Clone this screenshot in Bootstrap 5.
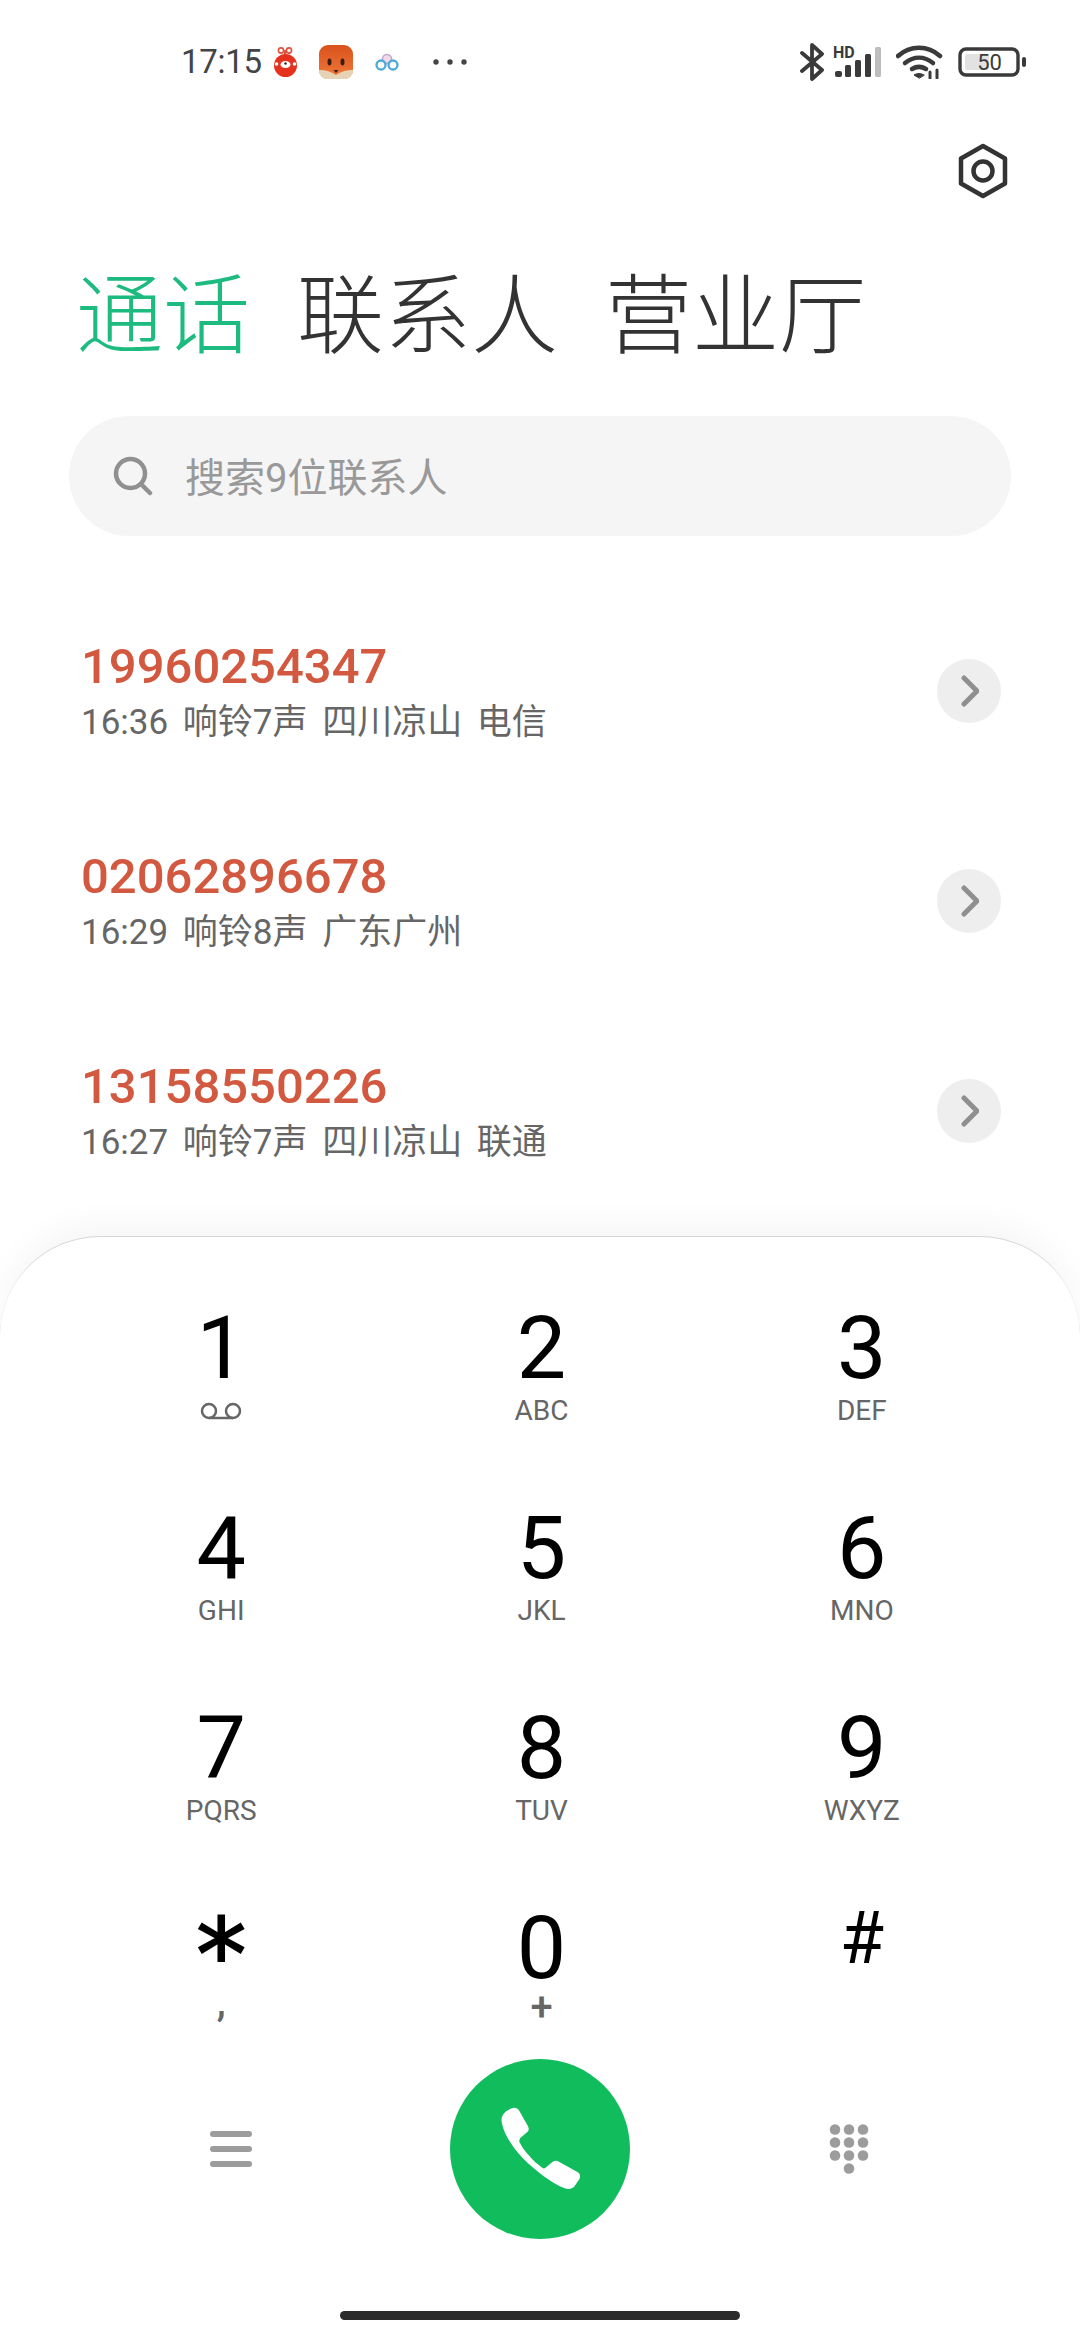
<!DOCTYPE html>
<html lang="zh">
<head>
<meta charset="utf-8">
<title>通话</title>
<link href="https://cdn.jsdelivr.net/npm/bootstrap@5.3.0/dist/css/bootstrap.min.css" rel="stylesheet">
<style>
html,body{margin:0;background:#fff;}
.shell{width:1080px;height:2340px;overflow:hidden;background:#fff;font-family:Roboto,"Noto Sans CJK SC",sans-serif;}
.statusbar{height:124px;padding:0 54px 0 181px;color:#444;}
.clock{font-size:33px;line-height:40px;width:92px;color:#444;letter-spacing:-.3px;}
.settings-row{height:96px;padding-right:71px;margin-top:-1px;}
.tabs{height:132px;margin-top:24px;padding-left:76px;gap:47px;font-size:87px;line-height:132px;font-weight:300;color:#333;white-space:nowrap;font-family:"Noto Sans CJK SC",sans-serif;}
.tabs .on{color:#1dbb80;}
.searchbox{height:120px;margin:41px 69px 0 69px;border-radius:60px;background:#f5f5f5;padding-left:44px;gap:32px;color:#999;font-size:40px;}
.searchbox span{padding-top:5px;}
.call-list{padding-top:50px;}
.call-row{height:210px;padding:0 79px 0 81px;}
.call-num{font-size:49px;line-height:58px;color:#d2593f;font-weight:500;}
.call-meta{font-size:35px;line-height:44px;color:#666;margin-top:5px;word-spacing:6px;}
.chev{width:64px;height:64px;border-radius:50%;background:#eee;}
.pad{height:1104px;margin-top:20px;border-radius:100px 100px 0 0;background:#fff;border-top:1px solid #d6d6d6;box-shadow:0 -14px 30px rgba(0,0,0,.035);}
.keys{width:961px;margin-left:61px;padding-top:65px;}
.keycell{height:200px;}
.digit{font-size:88px;line-height:92px;color:#000;font-weight:400;}
.digit-star{font-family:"DejaVu Sans",sans-serif;font-size:100px;line-height:92px;color:#000;padding-top:8px;height:92px;-webkit-text-stroke:2px #000;}
.digit-h{font-size:72px;line-height:92px;color:#000;margin-top:-9px;}
.sub{font-size:28px;line-height:30px;color:#666;height:30px;margin-top:2px;}
.sub-comma,.sub-plus{font-size:40px;font-weight:500;line-height:30px;height:30px;color:#666;}
.sub-comma{margin-top:-6px;}
.sub-plus{margin-top:-1px;}
.actions{padding-left:76px;margin-top:-43px;height:180px;}
.act{width:309px;}
.callbtn{width:180px;height:180px;border-radius:50%;background:#10bc5c;}
.homebar{width:400px;height:9px;border-radius:5px;background:#2b2b2b;margin:72px auto 0;}
</style>
</head>
<body>
<div class="shell d-flex flex-column">
  <div class="statusbar d-flex align-items-center justify-content-between">
    <div class="d-flex align-items-center">
      <span class="clock">17:15</span>
      <svg width="25" height="30" viewBox="0 0 25 30" style="margin-right:21px"><circle cx="8" cy="3.500" r="2.600" fill="none" stroke="#e0533c" stroke-width="1.600"/><circle cx="16" cy="3.500" r="2.600" fill="none" stroke="#e0533c" stroke-width="1.600"/><rect x="11" y="3" width="2.400" height="6" fill="#e0533c"/><circle cx="12.500" cy="18.500" r="11.500" fill="#e5321f"/><ellipse cx="12.500" cy="17.500" rx="5" ry="3.600" fill="#fff"/><circle cx="3.500" cy="17" r="1.800" fill="#fff"/><circle cx="21.500" cy="17" r="1.800" fill="#fff"/><circle cx="12.500" cy="16.500" r="1.200" fill="#3a1a14"/></svg>
      <svg width="34" height="34" viewBox="0 0 34 34" style="margin-right:22px"><defs><linearGradient id="fx" x1="0" y1="0" x2="0" y2="1"><stop offset="0" stop-color="#d9521c"/><stop offset="1" stop-color="#ef7a3a"/></linearGradient></defs><rect width="34" height="34" rx="9" fill="url(#fx)"/><path d="M0 25c6 0 11 1 17 5 6-4 11-5 17-5v1a8 8 0 0 1-8 8H8a8 8 0 0 1-8-8z" fill="#e6d2b4"/><ellipse cx="10.500" cy="17" rx="2" ry="3.400" fill="#3a1c12"/><ellipse cx="23.500" cy="17" rx="2" ry="3.400" fill="#3a1c12"/><path d="M14.500 25h5l-2.500 3z" fill="#3a1c12"/></svg>
      <svg width="24" height="18" viewBox="0 0 24 18" style="margin-right:34px"><circle cx="12" cy="6" r="4.500" fill="#f3d9e6" stroke="#c0a4cc" stroke-width="1.500"/><circle cx="6" cy="12" r="4.500" fill="none" stroke="#4ca9d8" stroke-width="2.300"/><circle cx="18" cy="12" r="4.500" fill="none" stroke="#4ca9d8" stroke-width="2.300"/></svg>
      <svg width="34" height="6" viewBox="0 0 34 6"><circle cx="3" cy="3" r="2.700" fill="#444"/><circle cx="17" cy="3" r="2.700" fill="#444"/><circle cx="31" cy="3" r="2.700" fill="#444"/></svg>
    </div>
    <div class="d-flex align-items-center">
      <svg width="24" height="38" viewBox="0 0 24 38" fill="none" stroke="#3a3a3a" stroke-width="3.800" stroke-linecap="round" stroke-linejoin="round"><path d="M2 10l20 17-10 9V2l10 9L2 28"/></svg>
      <svg width="52" height="38" viewBox="0 -3 52 38" class="ms-2"><text x="1" y="12" font-family="Roboto,sans-serif" font-size="16" font-weight="700" fill="#3a3a3a">HD</text><rect x="3" y="25" width="7" height="6" rx="2" fill="#3a3a3a"/><rect x="13" y="19" width="6" height="12" rx="1.500" fill="#3a3a3a"/><rect x="23" y="14" width="6" height="17" rx="1.500" fill="#3a3a3a"/><rect x="33" y="8" width="6" height="23" rx="1.500" fill="#3a3a3a"/><rect x="43" y="1" width="6" height="30" rx="1.500" fill="#bdbdbd"/></svg>
      <svg width="48" height="34" viewBox="0 0 48 34" style="margin-left:12px" fill="none" stroke="#3a3a3a" stroke-width="4.500" stroke-linecap="round"><path d="M2 11C14 0 32 0 44 11"/><path d="M9 18c9-7 19-7 28 0"/><path d="M16 24c5-3 9-3 14 0"/><path d="M23 33l-5-3c3-2 7-2 10 0z" fill="#3a3a3a" stroke-width="1"/><path d="M34 27v6M41 25v8" stroke-width="3"/></svg>
      <svg width="68" height="30" viewBox="0 0 68 30" style="margin-left:14px"><rect x="2" y="2" width="58" height="26" rx="6" fill="#fff" stroke="#3a3a3a" stroke-width="3.400"/><rect x="7" y="7" width="24" height="16" rx="2" fill="#e2e2e2"/><rect x="64" y="10" width="4" height="10" rx="2" fill="#3a3a3a"/><text x="31.500" y="23" text-anchor="middle" font-family="Roboto,sans-serif" font-size="22" fill="#3a3a3a">50</text></svg>
    </div>
  </div>

  <div class="settings-row d-flex align-items-center justify-content-end">
    <svg width="52" height="56" viewBox="0 0 52 56" fill="none" stroke="#333" stroke-width="4.500" stroke-linejoin="round"><path d="M26 3l22 12.500v25L26 53 4 40.500v-25z"/><circle cx="26" cy="28" r="9.500"/></svg>
  </div>

  <div class="tabs d-flex">
    <span class="on">通话</span><span>联系人</span><span>营业厅</span>
  </div>

  <div class="searchbox d-flex align-items-center">
    <svg width="40" height="40" viewBox="0 0 40 40" fill="none" stroke="#909090" stroke-width="4.500" stroke-linecap="round"><circle cx="17.500" cy="17.500" r="14.500"/><path d="M28 28l9 9"/></svg>
    <span>搜索9位联系人</span>
  </div>

  <div class="call-list">
    <div class="call-row d-flex align-items-center justify-content-between">
      <div><div class="call-num">19960254347</div><div class="call-meta">16:36 响铃7声 四川凉山 电信</div></div>
      <div class="chev d-flex align-items-center justify-content-center"><svg width="20" height="32" viewBox="-2 0 20 32" fill="none" stroke="#8f8f8f" stroke-width="5" stroke-linecap="round" stroke-linejoin="round"><path d="M3 3l13 13L3 29"/></svg></div>
    </div>
    <div class="call-row d-flex align-items-center justify-content-between">
      <div><div class="call-num">02062896678</div><div class="call-meta">16:29 响铃8声 广东广州</div></div>
      <div class="chev d-flex align-items-center justify-content-center"><svg width="20" height="32" viewBox="-2 0 20 32" fill="none" stroke="#8f8f8f" stroke-width="5" stroke-linecap="round" stroke-linejoin="round"><path d="M3 3l13 13L3 29"/></svg></div>
    </div>
    <div class="call-row d-flex align-items-center justify-content-between">
      <div><div class="call-num">13158550226</div><div class="call-meta">16:27 响铃7声 四川凉山 联通</div></div>
      <div class="chev d-flex align-items-center justify-content-center"><svg width="20" height="32" viewBox="-2 0 20 32" fill="none" stroke="#8f8f8f" stroke-width="5" stroke-linecap="round" stroke-linejoin="round"><path d="M3 3l13 13L3 29"/></svg></div>
    </div>
  </div>

  <div class="pad">
    <div class="keys row g-0">
      <div class="col-4 keycell text-center"><div class="digit">1</div><div class="sub d-flex justify-content-center align-items-center"><svg width="42" height="18" viewBox="0 0 42 18" fill="none" stroke="#666" stroke-width="2.500"><circle cx="9" cy="9" r="7"/><circle cx="33" cy="9" r="7"/><path d="M9 16h24"/></svg></div></div>
      <div class="col-4 keycell text-center"><div class="digit">2</div><div class="sub">ABC</div></div>
      <div class="col-4 keycell text-center"><div class="digit">3</div><div class="sub">DEF</div></div>
      <div class="col-4 keycell text-center"><div class="digit">4</div><div class="sub">GHI</div></div>
      <div class="col-4 keycell text-center"><div class="digit">5</div><div class="sub">JKL</div></div>
      <div class="col-4 keycell text-center"><div class="digit">6</div><div class="sub">MNO</div></div>
      <div class="col-4 keycell text-center"><div class="digit">7</div><div class="sub">PQRS</div></div>
      <div class="col-4 keycell text-center"><div class="digit">8</div><div class="sub">TUV</div></div>
      <div class="col-4 keycell text-center"><div class="digit">9</div><div class="sub">WXYZ</div></div>
      <div class="col-4 keycell text-center"><div class="digit-star">*</div><div class="sub-comma">,</div></div>
      <div class="col-4 keycell text-center"><div class="digit">0</div><div class="sub-plus">+</div></div>
      <div class="col-4 keycell text-center"><div class="digit-h">#</div></div>
    </div>
    <div class="actions d-flex align-items-center">
      <div class="act d-flex justify-content-center"><svg width="42" height="36" viewBox="0 0 42 36" fill="#9c9c9c"><rect width="42" height="6" rx="3"/><rect y="15" width="42" height="6" rx="3"/><rect y="30" width="42" height="6" rx="3"/></svg></div>
      <div class="act d-flex justify-content-center"><div class="callbtn d-flex align-items-center justify-content-center"><svg width="88" height="88" viewBox="0 0 80 80" fill="#fff"><path d="M12 4c-4 2-7 5-7 10 1 9 7 21 19 34 12 12 26 23 39 28 4 1 7 0 9-3l4-6c1-3 0-5-2-6L56 51c-2-1-4 0-5 1l-6 5c-1 1-2 1-3 0-4-3-8-6-12-11-4-4-7-9-9-13l1-3 7-6c1-1 1-3 0-5L21 5c-2-3-5-3-9-1z"/></svg></div></div>
      <div class="act d-flex justify-content-center"><svg width="46" height="50" viewBox="0 0 46 50" fill="#9c9c9c"><circle cx="9" cy="5.500" r="5.300"/><circle cx="23" cy="5.500" r="5.300"/><circle cx="37" cy="5.500" r="5.300"/><circle cx="9" cy="18.500" r="5.300"/><circle cx="23" cy="18.500" r="5.300"/><circle cx="37" cy="18.500" r="5.300"/><circle cx="9" cy="31.500" r="5.300"/><circle cx="23" cy="31.500" r="5.300"/><circle cx="37" cy="31.500" r="5.300"/><circle cx="23" cy="44.500" r="5.300"/></svg></div>
    </div>
    <div class="homebar"></div>
  </div>
</div>
<script src="https://cdn.jsdelivr.net/npm/bootstrap@5.3.0/dist/js/bootstrap.bundle.min.js"></script>
</body>
</html>
